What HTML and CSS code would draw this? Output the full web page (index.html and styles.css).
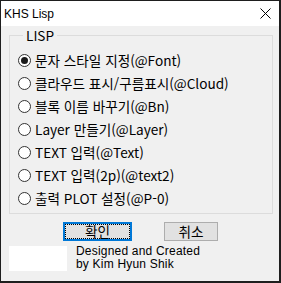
FILE: index.html
```html
<!DOCTYPE html>
<html lang="ko">
<head>
<meta charset="utf-8">
<title>KHS Lisp</title>
<link rel="stylesheet" href="styles.css">
</head>
<body>
<div class="window">
  <div class="titlebar">
    <span class="title">KHS Lisp</span>
    <svg class="close" width="11" height="11" viewBox="0 0 11 11"><path d="M0.5 0.5 L10.5 10.5 M10.5 0.5 L0.5 10.5" stroke="#000" stroke-width="1" fill="none"/></svg>
  </div>
  <div class="content">
    <fieldset class="group">
      <legend class="legend">LISP</legend>
      <label class="option"><span class="radio checked"></span><span class="label">문자 스타일 지정(@Font)</span></label>
      <label class="option"><span class="radio"></span><span class="label">클라우드 표시/구름표시(@Cloud)</span></label>
      <label class="option"><span class="radio"></span><span class="label">블록 이름 바꾸기(@Bn)</span></label>
      <label class="option"><span class="radio"></span><span class="label">Layer 만들기(@Layer)</span></label>
      <label class="option"><span class="radio"></span><span class="label">TEXT 입력(@Text)</span></label>
      <label class="option"><span class="radio"></span><span class="label">TEXT 입력(2p)(@text2)</span></label>
      <label class="option"><span class="radio"></span><span class="label">출력 PLOT 설정(@P-0)</span></label>
    </fieldset>
    <div class="buttons">
      <button class="btn btn-default">확인</button>
      <button class="btn btn-cancel">취소</button>
    </div>
    <div class="footer">
      <div class="logo-box"></div>
      <div class="credit">
        <div class="credit-line">Designed and Created</div>
        <div class="credit-line">by Kim Hyun Shik</div>
      </div>
    </div>
  </div>
</div>
</body>
</html>
```

FILE: styles.css
```css
html, body {
  margin: 0;
  padding: 0;
}
body {
  background: #1e1e1e;
  width: 281px;
  height: 283px;
  overflow: hidden;
}
.window {
  margin: 1px 2px 2px 1px;
  width: 278px;
  height: 280px;
  background: #f0f0f0;
  display: flex;
  flex-direction: column;
}
.titlebar {
  height: 25px;
  background: #ffffff;
  display: flex;
  align-items: center;
  justify-content: space-between;
  padding: 0 8px 0 3px;
  flex: none;
}
.title {
  font-family: "Liberation Sans", Arial, sans-serif;
  font-size: 12px;
  color: #000;
}
.close {
  display: block;
}
.content {
  padding: 0 6px 0 8px;
  font-family: "Noto Sans CJK KR", "Noto Sans", sans-serif;
  font-size: 13.6px;
  color: #000;
}
.group {
  margin: 2px 0 0 0;
  padding: 7px 0 3px 8px;
  border: 1px solid #dcdcdc;
  min-width: 0;
}
.legend {
  margin-left: 5px;
  padding: 0 3px;
  line-height: 14px;
  font-size: 13.6px;
}
.option {
  display: flex;
  align-items: center;
  height: 23px;
  gap: 4px;
  line-height: 23px;
  white-space: nowrap;
}
.radio {
  width: 11px;
  height: 11px;
  border: 1px solid #333333;
  border-radius: 50%;
  background: #ffffff;
  flex: none;
  position: relative;
}
.radio.checked::after {
  content: "";
  position: absolute;
  left: 2px;
  top: 2px;
  width: 7px;
  height: 7px;
  border-radius: 50%;
  background: #1a1a1a;
}
.buttons {
  display: flex;
  gap: 32px;
  padding-left: 54px;
  margin-top: 8px;
  align-items: center;
}
.btn {
  height: 19px;
  padding: 0;
  margin: 0;
  font-family: "Noto Sans CJK KR", sans-serif;
  font-size: 13.6px;
  line-height: 15px;
  color: #000;
  background: #e1e1e1;
  border: 1px solid #adadad;
  box-sizing: border-box;
}
.btn-default {
  width: 69px;
  border: 2px solid #0078d7;
  outline: 1px dotted #000;
  outline-offset: -3px;
}
.btn-cancel {
  width: 54px;
}
.footer {
  display: flex;
  gap: 9px;
  margin-top: 5px;
}
.logo-box {
  width: 58px;
  height: 25px;
  background: #ffffff;
  flex: none;
}
.credit {
  font-family: "Liberation Sans", Arial, sans-serif;
  font-size: 12px;
  letter-spacing: 0.2px;
  color: #000;
  margin-top: -1px;
}
.credit-line {
  line-height: 13px;
  height: 13px;
}
```
